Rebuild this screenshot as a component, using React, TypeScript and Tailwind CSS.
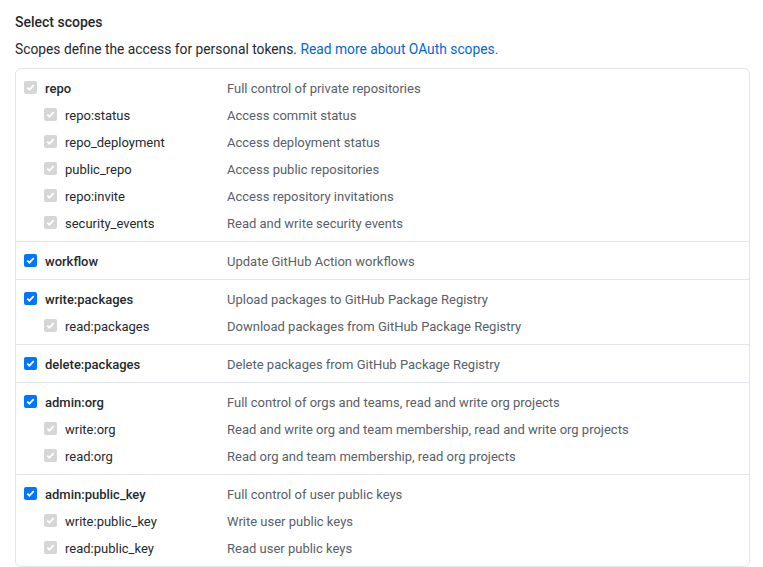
import React from "react";

type Row = { name: string; desc: string; sub?: boolean };
const groups: Row[][] = [
  [
    { name: "repo", desc: "Full control of private repositories" },
    { name: "repo:status", desc: "Access commit status", sub: true },
    { name: "repo_deployment", desc: "Access deployment status", sub: true },
    { name: "public_repo", desc: "Access public repositories", sub: true },
    { name: "repo:invite", desc: "Access repository invitations", sub: true },
    { name: "security_events", desc: "Read and write security events", sub: true },
  ],
  [{ name: "workflow", desc: "Update GitHub Action workflows" }],
  [
    { name: "write:packages", desc: "Upload packages to GitHub Package Registry" },
    { name: "read:packages", desc: "Download packages from GitHub Package Registry", sub: true },
  ],
  [{ name: "delete:packages", desc: "Delete packages from GitHub Package Registry" }],
  [
    { name: "admin:org", desc: "Full control of orgs and teams, read and write org projects" },
    { name: "write:org", desc: "Read and write org and team membership, read and write org projects", sub: true },
    { name: "read:org", desc: "Read org and team membership, read org projects", sub: true },
  ],
  [
    { name: "admin:public_key", desc: "Full control of user public keys" },
    { name: "write:public_key", desc: "Write user public keys", sub: true },
    { name: "read:public_key", desc: "Read user public keys", sub: true },
  ],
];

function Check({ disabled }: { disabled: boolean }) {
  return (
    <span
      className={
        "w-[13px] h-[13px] rounded-[2px] flex items-center justify-center shrink-0 " +
        (disabled ? "bg-[#d6d6d6]" : "bg-[#0075ff]")
      }
    >
      <svg width="11" height="11" viewBox="0 0 11 11">
        <path d="M2.3 5.6 L4.4 7.7 L8.7 3.2" fill="none" stroke="#ffffff" strokeWidth="1.8" />
      </svg>
    </span>
  );
}

export default function App() {
  return (
    <div
      className="bg-white w-[763px] h-[567px] overflow-hidden px-[15px] text-[14px] text-[#24292e]"
      style={{ fontFamily: 'Roboto, "Noto Sans", sans-serif' }}
    >
      <div className="pt-[12px] leading-[20px] font-medium">Select scopes</div>
      <div className="mt-[7px] leading-[20px] text-[13.8px]">
        Scopes define the access for personal tokens.{" "}
        <span className="text-[#0366d6]">Read more about OAuth scopes.</span>
      </div>
      <div className="mt-[9px] w-[735px] border border-[#e1e4e8] rounded-[6px] text-[13px]">
        {groups.map((g, gi) => (
          <div
            key={gi}
            className={
              "pt-[5px] pb-[5px] pl-[8px] " + (gi > 0 ? "border-t border-[#e1e4e8]" : "")
            }
          >
            {g.map((r) => (
              <div key={r.name} className="flex items-center h-[27px]">
                <div className={"flex items-center w-[203px] " + (r.sub ? "pl-[20px]" : "")}>
                  <Check disabled={!!r.sub || r.name === "repo"} />
                  <span
                    className={
                      "ml-[8px] mt-[2px] leading-[20px] " +
                      (r.sub ? "font-normal" : "font-medium")
                    }
                  >
                    {r.name}
                  </span>
                </div>
                <div className="mt-[2px] text-[#586069] leading-[20px] whitespace-nowrap">
                  {r.desc}
                </div>
              </div>
            ))}
          </div>
        ))}
      </div>
    </div>
  );
}
